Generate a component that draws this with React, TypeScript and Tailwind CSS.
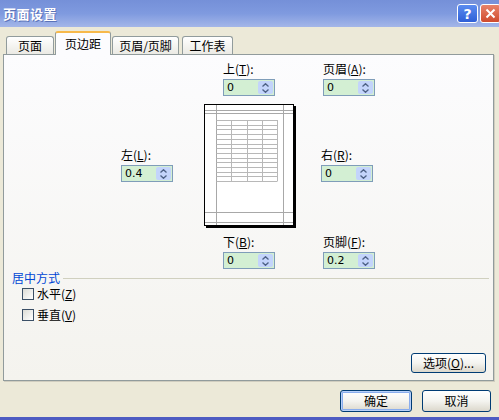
import React from 'react';

const Spinner = ({ value }: { value: string }) => (
  <div className="flex h-[17px] w-[52px] border border-[#7f9db9] bg-[#d3efd3]">
    <div className="flex-1 pl-[3px] font-['DejaVu_Sans',sans-serif] text-[11px] leading-[15px] text-black">{value}</div>
    <div className="m-px flex w-[15px] flex-col items-center justify-center gap-[2px] rounded-[2px] bg-[#c3d4fb]">
      <svg width="7" height="4" viewBox="0 0 7 4">
        <path d="M0.5 3.5 L3.5 0.7 L6.5 3.5" stroke="#4d6185" strokeWidth="1.3" fill="none" />
      </svg>
      <svg width="7" height="4" viewBox="0 0 7 4">
        <path d="M0.5 0.5 L3.5 3.3 L6.5 0.5" stroke="#4d6185" strokeWidth="1.3" fill="none" />
      </svg>
    </div>
  </div>
);

const Field = ({ label, keyChar, value }: { label: string; keyChar: string; value: string }) => (
  <div className="flex flex-col">
    <div className="h-[14px] whitespace-nowrap text-[12px] leading-[14px] text-black">
      {label}(<span className="underline">{keyChar}</span>):
    </div>
    <div className="mt-[3px]">
      <Spinner value={value} />
    </div>
  </div>
);

const PagePreview = () => {
  const rows = Array.from({ length: 14 }, (_, i) => 15 + i * 4.7);
  return (
    <div className="h-[122px] w-[90px] border border-black bg-white shadow-[2px_2px_0_#000]">
      <svg width="88" height="120" viewBox="0 0 88 120">
        <g stroke="#a8a8a8" strokeWidth="1">
          <line x1="11.5" y1="0" x2="11.5" y2="120" />
          <line x1="78.5" y1="0" x2="78.5" y2="120" />
          <line x1="0" y1="5.5" x2="88" y2="5.5" />
          <line x1="0" y1="8.5" x2="88" y2="8.5" />
          <line x1="0" y1="107.5" x2="88" y2="107.5" />
          <line x1="0" y1="117.5" x2="88" y2="117.5" />
        </g>
        <g stroke="#b8b8b8" strokeWidth="1">
          {rows.map((y, i) => (
            <line key={i} x1="11.5" y1={Math.round(y) + 0.5} x2="72.5" y2={Math.round(y) + 0.5} />
          ))}
          <line x1="26.5" y1="15" x2="26.5" y2="76" />
          <line x1="42.5" y1="15" x2="42.5" y2="76" />
          <line x1="57.5" y1="15" x2="57.5" y2="76" />
          <line x1="72.5" y1="15" x2="72.5" y2="76" />
        </g>
      </svg>
    </div>
  );
};

const Checkbox = ({ label, keyChar }: { label: string; keyChar: string }) => (
  <div className="flex h-[21px] items-center pl-[18px]">
    <div className="h-[12px] w-[12px] border border-[#3b4f66] bg-gradient-to-br from-[#dcdcd6] to-white" />
    <span className="ml-[3px] text-[12px] leading-[14px] text-black">
      {label}(<span className="underline">{keyChar}</span>)
    </span>
  </div>
);

const XpButton = ({ children, width, isDefault }: { children: React.ReactNode; width: string; isDefault?: boolean }) => (
  <div
    className={`flex h-[22px] ${width} items-center justify-center rounded-[3px] border border-[#003c74] bg-gradient-to-b from-white via-[#f4f4f0] to-[#dcd8cc] text-[12px] text-black ${
      isDefault ? 'shadow-[inset_0_0_0_1px_#b8d0f8,inset_0_0_0_2px_#89aded]' : ''
    }`}
  >
    {children}
  </div>
);

export default function App() {
  return (
    <div className="flex h-[420px] w-[499px] flex-col overflow-hidden bg-[#ece9d8] font-['Noto_Sans_CJK_SC',sans-serif]">
      {/* Title bar */}
      <div className="flex h-[27px] items-center bg-gradient-to-b from-[#7590d8] via-[#7f9adf] to-[#a4b6e8] pl-[3px]">
        <span className="text-[13px] font-bold tracking-[0.5px] text-white [text-shadow:1px_1px_0_#5a72b8]">页面设置</span>
        <div className="ml-auto -mr-[2px] flex gap-[2px]">
          <div className="flex h-[19px] w-[21px] items-center justify-center rounded-[3px] border border-white bg-gradient-to-b from-[#5c8cf0] to-[#2f5fd6] font-['DejaVu_Sans',sans-serif] text-[14px] font-bold leading-none text-white">
            ?
          </div>
          <div className="flex h-[19px] w-[21px] items-center justify-center rounded-[3px] border border-white bg-gradient-to-b from-[#e8836a] to-[#cf4a2c]">
            <svg width="11" height="11" viewBox="0 0 11 11">
              <path d="M1.5 1.5 L9.5 9.5 M9.5 1.5 L1.5 9.5" stroke="#fff" strokeWidth="2" />
            </svg>
          </div>
        </div>
      </div>

      {/* Tabs */}
      <div className="flex h-[27px] items-end text-[12px] text-black">
        <div className="ml-[6px] flex h-[18px] w-[48px] items-center justify-center rounded-t-[3px] border border-b-0 border-[#919b9c] bg-gradient-to-b from-white to-[#ebeae4]">
          页面
        </div>
        <div className="relative z-10 -mb-px ml-px flex h-[24px] w-[56px] items-start justify-center rounded-t-[3px] border border-b-0 border-[#919b9c] border-t-[2px] border-t-[#f7b94a] bg-[#fcfcfe] pt-[2px]">
          页边距
        </div>
        <div className="ml-px flex h-[18px] w-[67px] items-center justify-center rounded-t-[3px] border border-b-0 border-[#919b9c] bg-gradient-to-b from-white to-[#ebeae4]">
          页眉/页脚
        </div>
        <div className="ml-[3px] flex h-[18px] w-[51px] items-center justify-center rounded-t-[3px] border border-b-0 border-[#919b9c] bg-gradient-to-b from-white to-[#ebeae4]">
          工作表
        </div>
      </div>

      {/* Tab panel */}
      <div className="ml-[3px] flex h-[327px] w-[491px] flex-col border border-[#919b9c] bg-gradient-to-b from-[#fcfcfe] to-[#f4f3ee] shadow-[1px_1px_0_#d0cdbf]">
        <div className="flex pl-[219px] pt-[7px]">
          <div className="w-[100px]">
            <Field label="上" keyChar="T" value="0" />
          </div>
          <Field label="页眉" keyChar="A" value="0" />
        </div>

        <div className="mt-[8px] flex items-center pl-[117px]">
          <div className="w-[83px]">
            <Field label="左" keyChar="L" value="0.4" />
          </div>
          <PagePreview />
          <div className="ml-[27px]">
            <Field label="右" keyChar="R" value="0" />
          </div>
        </div>

        <div className="mt-[9px] flex pl-[219px]">
          <div className="w-[100px]">
            <Field label="下" keyChar="B" value="0" />
          </div>
          <Field label="页脚" keyChar="F" value="0.2" />
        </div>

        {/* Center on page */}
        <div className="mt-[2px] flex items-center pl-[8px] pr-[4px]">
          <span className="text-[12px] leading-[14px] text-[#0046d5]">居中方式</span>
          <div className="ml-[3px] h-px flex-1 bg-[#d0d0bf]" />
        </div>
        <div className="-mt-[2px]">
          <Checkbox label="水平" keyChar="Z" />
          <Checkbox label="垂直" keyChar="V" />
        </div>

        <div className="mt-auto flex justify-end pb-[7px] pr-[7px]">
          <div className="flex h-[20px] w-[75px] items-center justify-center rounded-[3px] border border-[#003c74] bg-gradient-to-b from-white via-[#f4f4f0] to-[#dcd8cc] text-[12px] text-black">
            选项(<span className="underline">O</span>)...
          </div>
        </div>
      </div>

      {/* Dialog buttons */}
      <div className="mt-[9px] flex justify-end gap-[10px] pr-[8px]">
        <XpButton width="w-[72px]" isDefault>
          确定
        </XpButton>
        <XpButton width="w-[69px]">取消</XpButton>
      </div>

      <div className="mt-auto h-[3px] bg-[#4e5cc2]" />
    </div>
  );
}
